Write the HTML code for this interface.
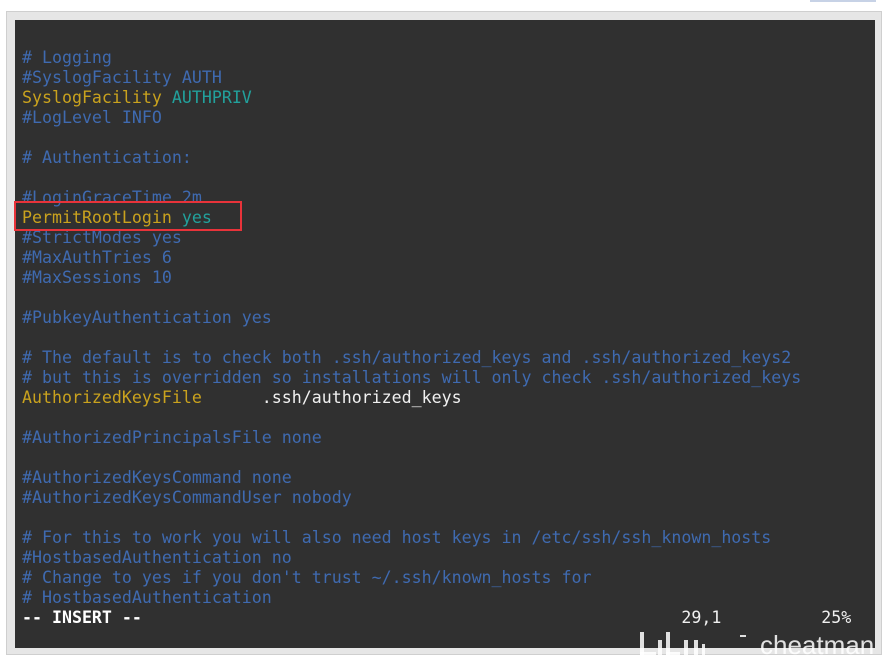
<!DOCTYPE html>
<html><head><style>
body{margin:0;width:893px;height:666px;background:#fff;position:relative;overflow:hidden}
.frame{position:absolute;left:6px;top:11px;width:876px;height:644px;background:#e6e6e6;border:1px solid #cfcfcf;box-sizing:border-box}
.term{position:absolute;left:15px;top:20px;width:860px;height:628px;background:#303030}
pre{position:absolute;left:22px;top:48px;margin:0;font:16.6px/20px "DejaVu Sans Mono","Liberation Mono",monospace;color:#3f6ab0;white-space:pre}
.y{color:#c9a21e}.t{color:#22a19c}.w{color:#f0f0f0}.b{color:#fff;font-weight:bold}
.box{position:absolute;left:14px;top:201px;width:228px;height:30px;border:2px solid #e8333a;box-sizing:border-box}
.wm{position:absolute;left:760px;top:630px;font:26px "Liberation Sans",sans-serif;color:rgba(255,255,255,.85)}
.bar{position:absolute;left:810px;top:0;width:66px;height:2px;background:#c7d2e6}
</style></head><body>
<div class="bar"></div>
<div class="frame"></div>
<div class="term"></div>
<pre># Logging
#SyslogFacility AUTH
<span class="y">SyslogFacility</span> <span class="t">AUTHPRIV</span>
#LogLevel INFO

# Authentication:

#LoginGraceTime 2m
<span class="y">PermitRootLogin</span> <span class="t">yes</span>
#StrictModes yes
#MaxAuthTries 6
#MaxSessions 10

#PubkeyAuthentication yes

# The default is to check both .ssh/authorized_keys and .ssh/authorized_keys2
# but this is overridden so installations will only check .ssh/authorized_keys
<span class="y">AuthorizedKeysFile</span>      <span class="w">.ssh/authorized_keys</span>

#AuthorizedPrincipalsFile none

#AuthorizedKeysCommand none
#AuthorizedKeysCommandUser nobody

# For this to work you will also need host keys in /etc/ssh/ssh_known_hosts
#HostbasedAuthentication no
# Change to yes if you don't trust ~/.ssh/known_hosts for
# HostbasedAuthentication
<span class="b">-- INSERT --</span>                                                      <span class="w">29,1          25%</span></pre>
<div class="box"></div>
<svg style="position:absolute;left:636px;top:630px" width="80" height="30"><g fill="rgba(255,255,255,.85)"><rect x="4" y="2" width="4" height="26"/><rect x="4" y="22" width="16" height="6"/><rect x="22" y="10" width="4" height="18"/><rect x="30" y="2" width="4" height="26"/><rect x="30" y="22" width="14" height="6"/><rect x="48" y="10" width="4" height="18"/><rect x="58" y="10" width="4" height="18"/><rect x="66" y="14" width="3" height="14"/></g></svg>
<div style="position:absolute;left:740px;top:635px;width:6px;height:2px;background:rgba(255,255,255,.85)"></div>
<div class="wm">cheatman</div>
</body></html>
